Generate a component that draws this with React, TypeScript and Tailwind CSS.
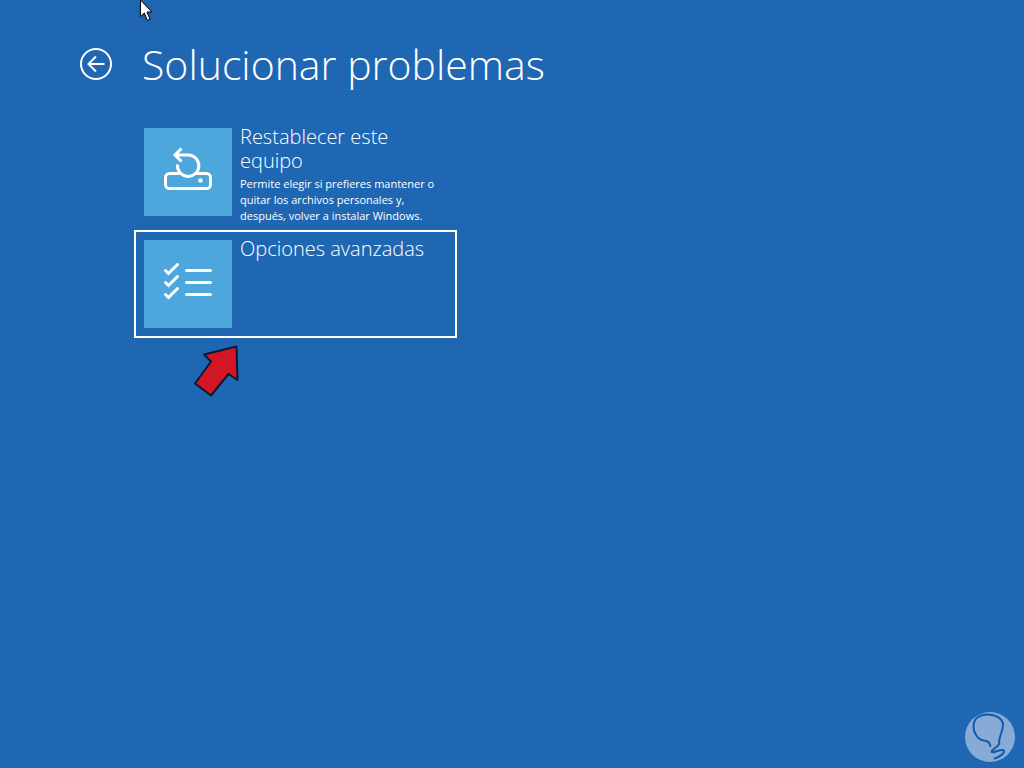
import type { JSX, ReactNode } from "react";

const BackIcon = (): JSX.Element => (
  <svg className="size-8" viewBox="0 0 32 32" fill="none" stroke="currentColor" strokeWidth="2" aria-hidden="true">
    <circle cx="16" cy="16" r="15" />
    <path d="M24.500 16H9M16 8.500L8.500 16L16 23.500" />
  </svg>
);

const ResetIcon = (): JSX.Element => (
  <svg className="size-22" viewBox="0 0 88 88" fill="none" stroke="currentColor" strokeWidth="3" aria-hidden="true">
    <path d="M36.500 45.500H25.500a4 4 0 0 0-4 4v7a4 4 0 0 0 4 4h37a4 4 0 0 0 4-4v-7a4 4 0 0 0-4-4H52" />
    <path d="M33.500 36.500a10.700 10.700 0 1 0 10.700-9.500H31" />
    <path d="M37.500 20.500L31 27L37.500 33.500" />
    <circle cx="56.500" cy="52.500" r="2.200" fill="currentColor" stroke="none" />
  </svg>
);

const ChecklistIcon = (): JSX.Element => (
  <svg
    className="size-22"
    viewBox="0 0 88 88"
    fill="none"
    stroke="currentColor"
    strokeWidth="3"
    strokeLinecap="round"
    aria-hidden="true"
  >
    <path d="M42.500 30.500h24M42.500 42.500h24M42.500 54.500h24" />
    <path d="M21.500 30.500l3 3l9-9M21.500 42.500l3 3l9-9M21.500 54.500l3 3l9-9" />
  </svg>
);

const Cursor = (): JSX.Element => (
  <svg className="absolute left-[140px] top-0 h-6 w-4 drop-shadow-sm" viewBox="0 0 16 24" aria-hidden="true">
    <path d="M.5 0V16.500L4.300 13L7.300 20.300L10 19.200L7 12H11.800Z" fill="#fff" stroke="#000" />
  </svg>
);

const RedArrow = (): JSX.Element => (
  <svg className="absolute left-[190px] top-[342px] h-14 w-13" viewBox="0 0 52 56" aria-hidden="true">
    <path
      d="M46.500 4.500L47.500 38L38.500 32L21 53.500L5 41.500L21 19.500L14 12.500Z"
      fill="#d21626"
      stroke="#0b1a33"
      strokeWidth="2"
      strokeLinejoin="round"
    />
  </svg>
);

const BulbMark = (): JSX.Element => (
  <svg className="absolute bottom-1.5 right-[9px] size-[50px]" viewBox="0 0 50 50" fill="none" aria-hidden="true">
    <circle cx="25" cy="25" r="25" fill="#85abd6" />
    <path
      d="M25.300 34C25 31 23 29 19 28.500C13 28 8.500 21 8.500 14.500C8.500 6 15 2.500 22 2.500C31 2.500 38 6.500 38 13C38 20 33.500 24 34 32C32 36 27 37 26.500 39.500C27 42 34 37.500 38 38C42 40 34 45.500 29.500 46.500"
      stroke="#1658a8"
      strokeWidth="2"
      strokeLinecap="round"
    />
  </svg>
);

type OptionProps = {
  icon: ReactNode;
  title: string;
  description?: string;
  selected?: boolean;
};

const Option = ({ icon, title, description, selected = false }: OptionProps): JSX.Element => (
  <button
    type="button"
    className={`flex w-full items-start gap-2 border-2 px-2 pt-[5px] text-left ${
      selected ? "border-white" : "border-transparent"
    }`}
  >
    <span className="mt-[3px] mb-2 size-22 shrink-0 bg-[#4da6dc]">{icon}</span>
    <span className="w-50">
      <span className="block text-[20px] leading-6 font-light">{title}</span>
      {description && <span className="mt-[3px] block text-[11px] leading-4">{description}</span>}
    </span>
  </button>
);

export default function App(): JSX.Element {
  return (
    <div className="relative min-h-screen overflow-hidden bg-[#1f67b3] font-['Open_Sans',sans-serif] text-white">
      <header className="flex items-center gap-[30px] px-20 pt-9">
        <button type="button" aria-label="Atrás">
          <BackIcon />
        </button>
        <h1 className="text-[41px] leading-14 font-light">Solucionar problemas</h1>
      </header>
      <main className="mt-[26px] ml-[134px] flex max-w-[323px] flex-col gap-1">
        <Option
          icon={<ResetIcon />}
          title="Restablecer este equipo"
          description="Permite elegir si prefieres mantener o quitar los archivos personales y, después, volver a instalar Windows."
        />
        <Option icon={<ChecklistIcon />} title="Opciones avanzadas" selected />
      </main>
      <Cursor />
      <RedArrow />
      <BulbMark />
    </div>
  );
}
